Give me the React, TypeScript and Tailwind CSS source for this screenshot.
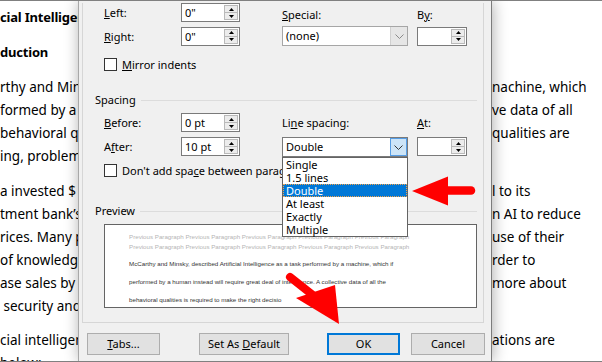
import React from 'react';

type DocRow = { left: string; right?: string; bold?: boolean; space?: string };

// only what peeks out on either side of the dialog
const docRows: DocRow[] = [
  { left: 'cial Intelligen', bold: true, space: 'mt-[5px]' },
  { left: 'duction', bold: true, space: 'mt-[12px]' },
  { left: 'rthy and Min', right: 'nachine, which', space: 'mt-[12px]' },
  { left: 'formed by a', right: 've data of all' },
  { left: 'behavioral qu', right: 'qualities are' },
  { left: 'ing, problem' },
  { left: 'a invested $', right: 'l to its', space: 'mt-[12px]' },
  { left: 'tment bank’s', right: 'n AI to reduce' },
  { left: 'rices. Many p', right: 'use of their' },
  { left: 'of knowledge', right: 'rder to' },
  { left: 'ase sales by i', right: 'more about' },
  { left: '\u00a0security and' },
  { left: 'cial intelligen', right: 'ations are', space: 'mt-[11px]' },
  { left: 'below:' },
];

const lineOptions = ['Single', '1.5 lines', 'Double', 'At least', 'Exactly', 'Multiple'];

function TriUp() {
  return (
    <svg width="5" height="3" viewBox="0 0 5 3">
      <polygon points="0,3 2.5,0 5,3" fill="#000" />
    </svg>
  );
}

function TriDown() {
  return (
    <svg width="5" height="3" viewBox="0 0 5 3">
      <polygon points="0,0 5,0 2.5,3" fill="#000" />
    </svg>
  );
}

function Chevron({ color }: { color: string }) {
  return (
    <svg width="9" height="5" viewBox="0 0 9 5">
      <polyline points="0.5,0.5 4.5,4.5 8.5,0.5" fill="none" stroke={color} strokeWidth="1" />
    </svg>
  );
}

function SpinBox({ value, wide }: { value?: string; wide?: boolean }) {
  return (
    <div className={`flex h-[19px] items-stretch border border-[#7a7a7a] bg-white ${wide ? 'w-[59px]' : 'w-[50px]'}`}>
      <span className="flex-1 pl-[3px] leading-[17px]">{value}</span>
      <div className="my-px mr-px flex w-[14px] flex-col border border-[#b9b9b9] bg-[#ececec]">
        <div className="flex flex-1 items-center justify-center border-b border-[#b9b9b9]">
          <TriUp />
        </div>
        <div className="flex flex-1 items-center justify-center">
          <TriDown />
        </div>
      </div>
    </div>
  );
}

function Select({ value, active }: { value: string; active?: boolean }) {
  return (
    <div className={`flex h-[20px] w-[126px] border bg-white ${active ? 'border-[#7a7a7a]' : 'border-[#a6a6a6]'}`}>
      <span className="flex-1 pl-[3px] leading-[18px]">{value}</span>
      {active ? (
        <div className="flex w-[17px] items-center justify-center border border-[#569de5] bg-[#cce4f7]">
          <Chevron color="#333" />
        </div>
      ) : (
        <div className="flex w-[17px] items-center justify-center border-l border-[#d0d0d0] bg-[#e6e6e6]">
          <Chevron color="#8a8a8a" />
        </div>
      )}
    </div>
  );
}

function CheckBox({ children }: { children: React.ReactNode }) {
  return (
    <div className="flex h-[13px] items-center pl-[21px]">
      <div className="h-[13px] w-[13px] border border-[#333] bg-white" />
      <span className="ml-[5px] whitespace-nowrap leading-[13px]">{children}</span>
    </div>
  );
}

function GroupTitle({ title }: { title: string }) {
  return (
    <div className="flex h-[16px] items-center pl-[12px] pr-[6px]">
      <span className="leading-[16px]">{title}</span>
      <div className="ml-[5px] h-px flex-1 bg-[#dcdcdc]" />
    </div>
  );
}

function Button({ children, primary, w }: { children: React.ReactNode; primary?: boolean; w: string }) {
  return (
    <div
      className={`flex h-[22px] items-center justify-center bg-[#e1e1e1] ${w} ${
        primary ? 'border-2 border-[#0078d7]' : 'border border-[#adadad]'
      }`}
    >
      {children}
    </div>
  );
}

export default function App() {
  return (
    <div className="relative h-[362px] w-[602px] overflow-hidden border-y border-[#808080] bg-white text-black">
      {/* document behind the dialog */}
      <div className="font-['Noto_Sans',sans-serif] text-[13.5px]">
        {docRows.map((row, i) => (
          <div key={i} className={`flex h-[23px] whitespace-nowrap leading-[23px] ${row.space ?? ''}`}>
            <span
              className={`w-[492px] overflow-hidden ${row.bold ? 'text-[13px] font-bold tracking-[-0.2px]' : ''}`}
            >
              {row.left}
            </span>
            <span>{row.right}</span>
          </div>
        ))}
      </div>

      {/* Paragraph dialog */}
      <div className="absolute bottom-0 left-[78px] top-0 w-[414px] border-x border-l-[#a8a8a8] border-r-[#7c7c7c] bg-[#f0f0f0] font-['Noto_Sans',sans-serif] text-[11px] shadow-[1px_0_14px_rgba(0,0,0,0.32)]">
        <div className="ml-[3px] w-[402px] border-x border-b border-[#d6d6d6] pb-[14px]">
          {/* Indentation */}
          <div className="mt-[2px] flex h-[19px] pl-[21px]">
            <div className="w-[77px] leading-[19px]">
              <span className="underline underline-offset-1">L</span>eft:
            </div>
            <SpinBox value={'0"'} wide />
            <div className="w-[42px]" />
            <div className="mt-[2px] w-[126px] leading-[19px]">
              <span className="underline underline-offset-1">S</span>pecial:
            </div>
            <div className="w-[9px]" />
            <div className="mt-[2px] leading-[19px]">
              B<span className="underline underline-offset-1">y</span>:
            </div>
          </div>
          <div className="mt-[4px] flex h-[20px] items-center pl-[21px]">
            <div className="w-[77px] leading-[19px]">
              <span className="underline underline-offset-1">R</span>ight:
            </div>
            <SpinBox value={'0"'} wide />
            <div className="w-[42px]" />
            <Select value="(none)" />
            <div className="w-[9px]" />
            <SpinBox />
          </div>
          <div className="mt-[12px]">
            <CheckBox>
              <span className="underline underline-offset-1">M</span>irror indents
            </CheckBox>
          </div>

          {/* Spacing */}
          <div className="mt-[21px]">
            <GroupTitle title="Spacing" />
          </div>
          <div className="mt-[5px] flex h-[19px] items-center pl-[21px]">
            <div className="w-[77px] leading-[19px]">
              <span className="underline underline-offset-1">B</span>efore:
            </div>
            <SpinBox value="0 pt" wide />
            <div className="w-[42px]" />
            <div className="w-[126px] leading-[19px]">
              Li<span className="underline underline-offset-1">n</span>e spacing:
            </div>
            <div className="w-[9px]" />
            <div className="leading-[19px]">
              <span className="underline underline-offset-1">A</span>t:
            </div>
          </div>
          <div className="relative z-10 mt-[5px] flex h-[20px] items-start pl-[21px]">
            <div className="w-[77px] leading-[19px]">
              A<span className="underline underline-offset-1">f</span>ter:
            </div>
            <SpinBox value="10 pt" wide />
            <div className="w-[42px]" />
            <div className="relative">
              <Select value="Double" active />
              <div className="absolute left-0 top-full w-[126px] border border-[#646464] bg-white">
                {lineOptions.map((opt) => (
                  <div
                    key={opt}
                    className={`h-[13px] whitespace-nowrap pl-[3px] leading-[13px] ${
                      opt === 'Double'
                        ? 'bg-[#0078d7] text-white outline-1 -outline-offset-1 outline-dotted outline-[#f2a24a]'
                        : ''
                    }`}
                  >
                    {opt}
                  </div>
                ))}
              </div>
            </div>
            <div className="w-[9px]" />
            <SpinBox />
          </div>
          <div className="mt-[7px]">
            <CheckBox>
              Don't add spa<span className="underline underline-offset-1">c</span>e between paragraphs of the same style
            </CheckBox>
          </div>

          {/* Preview */}
          <div className="mt-[26px]">
            <GroupTitle title="Preview" />
          </div>
          <div className="ml-[21px] mt-[5px] h-[84px] w-[373px] overflow-hidden whitespace-nowrap border border-[#646464] bg-white pl-[24px] pt-[7px] font-['Liberation_Sans',sans-serif] text-[6.2px]">
            <div className="h-[10px] leading-[10px] text-[#b5b5b5]">
              Previous Paragraph Previous Paragraph Previous Paragraph Previous Paragraph Previous Paragraph
            </div>
            <div className="h-[10px] leading-[10px] text-[#b5b5b5]">
              Previous Paragraph Previous Paragraph Previous Paragraph Previous Paragraph Previous Paragraph
            </div>
            <div className="mt-[3px] leading-[18px] text-[#333]">
              <div>McCarthy and Minsky, described Artificial Intelligence as a task performed by a machine, which if</div>
              <div>performed by a human instead will require great deal of intelligence. A collective data of all the</div>
              <div>behavioral qualities is required to make the right decisio</div>
            </div>
          </div>
        </div>

        {/* Buttons */}
        <div className="mt-[10px] flex pl-[8px]">
          <Button w="w-[73px]">
            <span>
              <span className="underline underline-offset-1">T</span>abs...
            </span>
          </Button>
          <div className="ml-[39px]">
            <Button w="w-[90px]">
              <span>
                Set As <span className="underline underline-offset-1">D</span>efault
              </span>
            </Button>
          </div>
          <div className="ml-[38px]">
            <Button w="w-[73px]" primary>
              OK
            </Button>
          </div>
          <div className="ml-[11px]">
            <Button w="w-[74px]">Cancel</Button>
          </div>
        </div>
      </div>

      {/* red callout arrows */}
      <svg className="pointer-events-none absolute -top-px left-0" width="602" height="362" viewBox="0 0 602 362">
        <line x1="446" y1="190.5" x2="471" y2="190.5" stroke="#ff0000" strokeWidth="8.5" strokeLinecap="round" />
        <polygon points="412,191 448,176.5 448,205.5" fill="#ff0000" />
        <line x1="290" y1="277" x2="314" y2="296" stroke="#ff0000" strokeWidth="8" strokeLinecap="round" />
        <polygon points="296,298 335,285 339,324" fill="#ff0000" />
      </svg>
    </div>
  );
}
